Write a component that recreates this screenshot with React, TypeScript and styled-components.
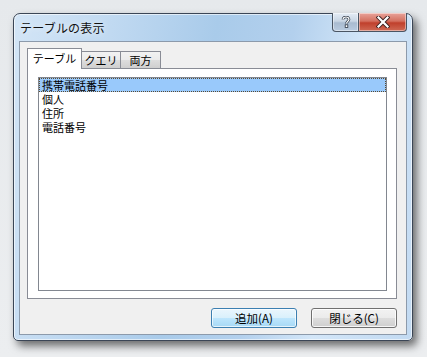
import React from 'react';
import styled, { createGlobalStyle } from 'styled-components';

const GlobalStyle = createGlobalStyle`
  html, body {
    margin: 0;
    padding: 0;
    background: #e9ecef;
    font-family: "Noto Sans CJK JP", "Noto Sans", sans-serif;
  }
`;

const Page = styled.div`
  width: 427px;
  height: 357px;
  padding: 13px 0 0 13px;
  box-sizing: border-box;
  background: linear-gradient(180deg, #e6e9ec 0%, #eceef0 100%);
`;

const Window = styled.div`
  width: 400px;
  height: 328px;
  box-sizing: border-box;
  border: 1px solid #3b4656;
  border-radius: 7px 7px 5px 5px;
  padding: 0 5px 5px 5px;
  display: flex;
  flex-direction: column;
  background: linear-gradient(
    100deg,
    #d3e5f6 0%,
    #c0d9f1 22%,
    #a9cbea 45%,
    #b3d0ed 62%,
    #d3e6f8 78%,
    #c2daf2 100%
  );
  box-shadow: inset 0 0 0 1px rgba(255, 255, 255, 0.6), 4px 5px 9px rgba(0, 0, 0, 0.55);
`;

const TitleBar = styled.div`
  height: 27px;
  display: flex;
  align-items: flex-start;
`;

const Title = styled.span`
  flex: 1;
  padding: 5px 0 0 1px;
  font-size: 12px;
  color: #111;
  letter-spacing: 0.2px;
  text-shadow: 0 0 6px rgba(255, 255, 255, 0.9);
`;

const CaptionButton = styled.div<{ $close?: boolean }>`
  margin-top: -1px;
  width: ${p => (p.$close ? 48 : 27)}px;
  height: 19px;
  box-sizing: border-box;
  display: flex;
  align-items: center;
  justify-content: center;
  border: 1px solid #4a5563;
  border-top: none;
  border-left: ${p => (p.$close ? 'none' : '1px solid #4a5563')};
  border-radius: ${p => (p.$close ? '0 0 4px 0' : '0 0 0 4px')};
  background: ${p =>
    p.$close
      ? 'linear-gradient(180deg, #e8a39a 0%, #d4705f 45%, #c0402c 55%, #cf6a55 100%)'
      : 'linear-gradient(180deg, #e4ecf5 0%, #c9d6e4 45%, #a9bbd0 55%, #b9cbe0 100%)'};
  box-shadow: inset 0 0 0 1px rgba(255, 255, 255, 0.45);
`;

const Client = styled.div`
  flex: 1;
  border: 1px solid #8c9aab;
  background: #f0f0f0;
  padding: 6px 9px 0 7px;
  display: flex;
  flex-direction: column;
`;

const TabStrip = styled.div`
  display: flex;
  align-items: flex-end;
  height: 21px;
  position: relative;
  z-index: 1;
  margin-bottom: -1px;
`;

const Tab = styled.div<{ $active?: boolean; $width: number }>`
  box-sizing: border-box;
  width: ${p => p.$width}px;
  height: ${p => (p.$active ? 21 : 18)}px;
  padding-top: ${p => (p.$active ? 1 : 0)}px;
  margin-left: -1px;
  text-align: center;
  border: 1px solid #898c95;
  border-bottom: ${p => (p.$active ? 'none' : '1px solid #898c95')};
  background: ${p =>
    p.$active ? '#ffffff' : 'linear-gradient(180deg, #f2f2f2 0%, #ebebeb 50%, #dddddd 51%, #cfcfcf 100%)'};
  font-size: 11px;
  line-height: 16px;
  color: #000;
  white-space: nowrap;
  &:first-child {
    margin-left: 0;
  }
`;

const TabPanel = styled.div`
  height: 231px;
  box-sizing: border-box;
  border: 1px solid #898c95;
  background: #ffffff;
  padding: 8px 9px 7px 10px;
  display: flex;
`;

const ListBox = styled.div`
  flex: 1;
  border: 1px solid #828790;
  background: #ffffff;
`;

const ListItem = styled.div<{ $selected?: boolean }>`
  height: 14px;
  line-height: 14px;
  padding-left: 3px;
  font-size: 11px;
  color: #000;
  box-sizing: border-box;
  background: ${p => (p.$selected ? '#99c9fb' : 'transparent')};
  outline: ${p => (p.$selected ? '1px dotted #5a4a30' : 'none')};
  outline-offset: -1px;
  white-space: nowrap;
`;

const ButtonRow = styled.div`
  display: flex;
  justify-content: flex-end;
  gap: 14px;
  margin-top: 9px;
`;

const Button = styled.div<{ $default?: boolean }>`
  width: 86px;
  height: 20px;
  box-sizing: border-box;
  border: 1px solid ${p => (p.$default ? '#3c7fb1' : '#707070')};
  border-radius: 3px;
  background: ${p =>
    p.$default
      ? 'linear-gradient(180deg, #eaf6fd 0%, #d9f0fc 50%, #bee6fd 51%, #a7d9f5 100%)'
      : 'linear-gradient(180deg, #f2f2f2 0%, #ebebeb 50%, #dddddd 51%, #cfcfcf 100%)'};
  box-shadow: inset 0 0 0 1px ${p => (p.$default ? 'rgba(255,255,255,0.7)' : 'rgba(255,255,255,0.8)')};
  display: flex;
  align-items: center;
  justify-content: center;
  font-size: 11.5px;
  color: #000;
`;

const HelpGlyph = () => (
  <svg width="10" height="12" viewBox="0 0 10 12">
    <path
      d="M2 3.5 C2 1.5 3.5 1 5 1 C6.8 1 8 2 8 3.4 C8 5 5.5 5.5 5.5 7.5"
      fill="none"
      stroke="#2a3442"
      strokeWidth="2.6"
    />
    <path
      d="M2 3.5 C2 1.5 3.5 1 5 1 C6.8 1 8 2 8 3.4 C8 5 5.5 5.5 5.5 7.5"
      fill="none"
      stroke="#ffffff"
      strokeWidth="1.2"
    />
    <rect x="4.2" y="8.8" width="2.6" height="2.6" fill="#ffffff" stroke="#2a3442" strokeWidth="0.8" />
  </svg>
);

const CloseGlyph = () => (
  <svg width="14" height="12" viewBox="0 0 14 12">
    <path d="M2.5 1.5 L11.5 10.5 M11.5 1.5 L2.5 10.5" stroke="#3a2020" strokeWidth="4" strokeLinecap="square" />
    <path d="M2.5 1.5 L11.5 10.5 M11.5 1.5 L2.5 10.5" stroke="#ffffff" strokeWidth="2.2" strokeLinecap="square" />
  </svg>
);

const tabs = [
  { label: 'テーブル', width: 55 },
  { label: 'クエリ', width: 40 },
  { label: '両方', width: 41 },
];

const items = ['携帯電話番号', '個人', '住所', '電話番号'];

export default function App() {
  return (
    <>
      <GlobalStyle />
      <Page>
        <Window>
          <TitleBar>
            <Title>テーブルの表示</Title>
            <CaptionButton>
              <HelpGlyph />
            </CaptionButton>
            <CaptionButton $close>
              <CloseGlyph />
            </CaptionButton>
          </TitleBar>
          <Client>
            <TabStrip>
              {tabs.map((t, i) => (
                <Tab key={t.label} $active={i === 0} $width={t.width}>
                  {t.label}
                </Tab>
              ))}
            </TabStrip>
            <TabPanel>
              <ListBox>
                {items.map((item, i) => (
                  <ListItem key={item} $selected={i === 0}>
                    {item}
                  </ListItem>
                ))}
              </ListBox>
            </TabPanel>
            <ButtonRow>
              <Button $default>追加(A)</Button>
              <Button>閉じる(C)</Button>
            </ButtonRow>
          </Client>
        </Window>
      </Page>
    </>
  );
}
